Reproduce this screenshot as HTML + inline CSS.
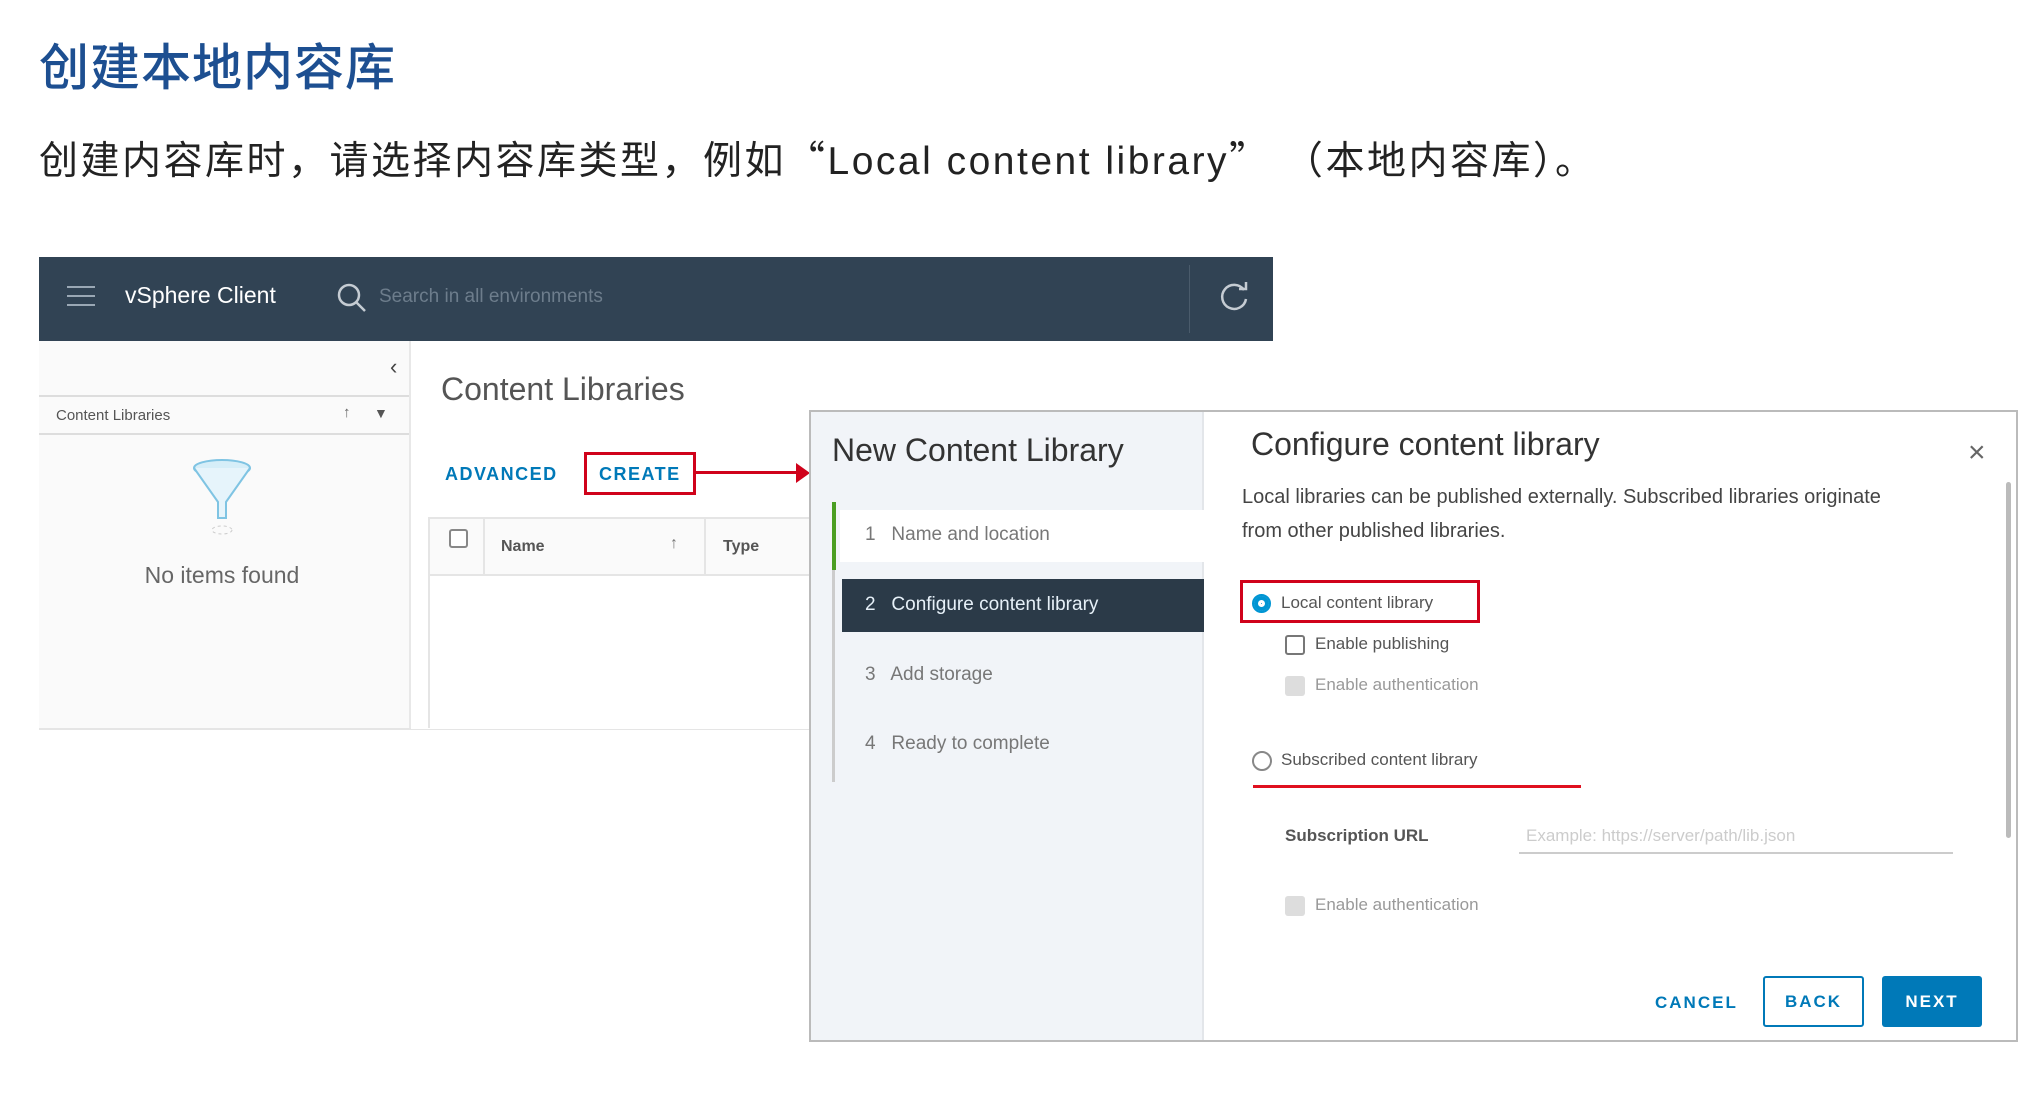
<!DOCTYPE html>
<html><head><meta charset="utf-8"><style>
*{box-sizing:border-box;margin:0;padding:0}
body{width:2035px;height:1117px;background:#fff;position:relative;overflow:hidden;font-family:"Liberation Sans","Noto Sans CJK SC",sans-serif;color:#333}
.a{position:absolute;white-space:nowrap}
.c{font-family:"Noto Sans CJK SC",sans-serif}
</style></head><body>
<div class="a" style="left:39px;top:28px;font-size:50px;color:#1d4f91;font-family:'Noto Sans CJK SC',sans-serif;font-weight:500;letter-spacing:1px">创建本地内容库</div>
<div class="a" style="left:39px;top:130px;font-size:39px;color:#222;letter-spacing:2.5px;font-family:'Liberation Sans','Noto Sans CJK SC',sans-serif">创建内容库时，请选择内容库类型，例如<span class="c">“</span>Local content library<span class="c">”</span> <span class="c">（</span>本地内容库<span class="c">）</span>。</div>

<!-- header -->
<div class="a" style="left:39px;top:257px;width:1234px;height:84px;background:#314354"></div>
<div class="a" style="left:67px;top:286px;width:28px;height:2px;background:#9aa8b5;box-shadow:0 9px 0 #9aa8b5,0 18px 0 #9aa8b5"></div>
<div class="a" style="left:125px;top:282px;font-size:23px;color:#fff">vSphere Client</div>
<svg class="a" style="left:336px;top:282px" width="32" height="32"><circle cx="13" cy="13" r="10" fill="none" stroke="#c5ccd3" stroke-width="2.5"/><line x1="20" y1="20" x2="29" y2="29" stroke="#c5ccd3" stroke-width="2.5"/></svg>
<div class="a" style="left:379px;top:286px;font-size:19px;color:#6d7d8c">Search in all environments</div>
<div class="a" style="left:1189px;top:265px;width:1px;height:68px;background:#4a5b6b"></div>
<svg class="a" style="left:1217px;top:280px" width="34" height="34"><path d="M27 10 A12 12 0 1 0 29 19" fill="none" stroke="#c5ccd3" stroke-width="2.5"/><path d="M22 9 L29 9 L29 2" fill="none" stroke="#c5ccd3" stroke-width="2.5"/></svg>

<!-- left panel -->
<div class="a" style="left:39px;top:341px;width:370px;height:388px;background:#fafafa"></div>
<div class="a" style="left:409px;top:341px;width:2px;height:388px;background:#e8e8e8"></div>
<div class="a" style="left:390px;top:354px;font-size:22px;color:#444">‹</div>
<div class="a" style="left:39px;top:395px;width:370px;height:2px;background:#ddd"></div>
<div class="a" style="left:56px;top:407px;font-size:15px;color:#555">Content Libraries</div>
<div class="a" style="left:343px;top:404px;font-size:15px;color:#666">↑</div>
<div class="a" style="left:374px;top:405px;font-size:14px;color:#555">▼</div>
<div class="a" style="left:39px;top:433px;width:370px;height:2px;background:#ddd"></div>
<svg class="a" style="left:190px;top:458px" width="66" height="80"><ellipse cx="32" cy="10" rx="28" ry="8" fill="#d6eef8" stroke="#7fc4e3" stroke-width="2"/><path d="M4 10 L28 44 L28 60 L36 60 L36 44 L60 10" fill="#e6f4fb" stroke="#7fc4e3" stroke-width="2"/><ellipse cx="32" cy="72" rx="10" ry="4" fill="none" stroke="#ccc" stroke-dasharray="3 3"/></svg>
<div class="a" style="left:122px;top:562px;width:200px;text-align:center;font-size:23px;color:#666">No items found</div>
<div class="a" style="left:39px;top:728px;width:770px;height:2px;background:#e5e5e5"></div>

<!-- content -->
<div class="a" style="left:411px;top:341px;width:862px;height:388px;background:#fff"></div>
<div class="a" style="left:441px;top:371px;font-size:32px;color:#555">Content Libraries</div>
<div class="a" style="left:445px;top:464px;font-size:18px;color:#0079b8;letter-spacing:1.5px;font-weight:bold">ADVANCED</div>
<div class="a" style="left:584px;top:452px;width:112px;height:43px;border:3px solid #d0021b"></div>
<div class="a" style="left:599px;top:464px;font-size:18px;color:#0079b8;letter-spacing:1.5px;font-weight:bold">CREATE</div>
<div class="a" style="left:696px;top:471px;width:104px;height:3px;background:#d0021b"></div>
<svg class="a" style="left:796px;top:463px" width="14" height="20"><path d="M0 0 L14 10 L0 20Z" fill="#d0021b"/></svg>
<div class="a" style="left:428px;top:517px;width:381px;height:59px;background:#fafafa;border-top:2px solid #e5e5e5;border-bottom:2px solid #e5e5e5;border-left:2px solid #e5e5e5"></div>
<div class="a" style="left:449px;top:529px;width:19px;height:19px;border:2px solid #888;border-radius:3px;background:#fff"></div>
<div class="a" style="left:483px;top:519px;width:2px;height:55px;background:#e5e5e5"></div>
<div class="a" style="left:704px;top:519px;width:2px;height:55px;background:#e5e5e5"></div>
<div class="a" style="left:501px;top:538px;font-size:16px;color:#555;font-weight:bold">Name</div>
<div class="a" style="left:670px;top:535px;font-size:16px;color:#777">↑</div>
<div class="a" style="left:723px;top:538px;font-size:16px;color:#555;font-weight:bold">Type</div>
<div class="a" style="left:428px;top:576px;width:2px;height:152px;background:#e5e5e5"></div>

<!-- dialog -->
<div class="a" style="left:809px;top:410px;width:1209px;height:632px;background:#fff;border:2px solid #bbb"></div>
<div class="a" style="left:811px;top:412px;width:393px;height:628px;background:#f1f4f8;border-right:2px solid #e3e6ea"></div>
<div class="a" style="left:832px;top:432px;font-size:32px;color:#333">New Content Library</div>
<div class="a" style="left:832px;top:502px;width:3px;height:280px;background:#ccc"></div>
<div class="a" style="left:832px;top:502px;width:4px;height:68px;background:#4a9e23"></div>
<div class="a" style="left:840px;top:510px;width:364px;height:52px;background:#fff"></div>
<div class="a" style="left:865px;top:524px;font-size:19px;color:#777">1&nbsp;&nbsp; Name and location</div>
<div class="a" style="left:842px;top:579px;width:362px;height:53px;background:#2b3a48"></div>
<div class="a" style="left:865px;top:594px;font-size:19px;color:#e6f0f8">2&nbsp;&nbsp; Configure content library</div>
<div class="a" style="left:865px;top:664px;font-size:19px;color:#777">3&nbsp;&nbsp; Add storage</div>
<div class="a" style="left:865px;top:733px;font-size:19px;color:#777">4&nbsp;&nbsp; Ready to complete</div>

<div class="a" style="left:1251px;top:426px;font-size:32px;color:#333">Configure content library</div>
<div class="a" style="left:1968px;top:436px;font-size:30px;color:#666">×</div>
<div class="a" style="left:2006px;top:482px;width:5px;height:356px;background:#bbb;border-radius:3px"></div>
<div class="a" style="left:1242px;top:480px;font-size:20px;color:#444;line-height:34px">Local libraries can be published externally. Subscribed libraries originate<br>from other published libraries.</div>

<div class="a" style="left:1240px;top:580px;width:240px;height:43px;border:3px solid #d0021b"></div>
<div class="a" style="left:1252px;top:594px;width:19px;height:19px;border-radius:50%;background:#0095d3;border:2px solid #0095d3;box-shadow:inset 0 0 0 4px #0095d3,inset 0 0 0 7px #fff"></div>
<div class="a" style="left:1281px;top:593px;font-size:17px;color:#555">Local content library</div>
<div class="a" style="left:1285px;top:635px;width:20px;height:20px;border:2px solid #777;border-radius:3px"></div>
<div class="a" style="left:1315px;top:634px;font-size:17px;color:#555">Enable publishing</div>
<div class="a" style="left:1285px;top:676px;width:20px;height:20px;background:#ddd;border-radius:3px"></div>
<div class="a" style="left:1315px;top:675px;font-size:17px;color:#999">Enable authentication</div>
<div class="a" style="left:1252px;top:751px;width:20px;height:20px;border:2px solid #888;border-radius:50%"></div>
<div class="a" style="left:1281px;top:750px;font-size:17px;color:#555">Subscribed content library</div>
<div class="a" style="left:1253px;top:785px;width:328px;height:3px;background:#e0101f"></div>
<div class="a" style="left:1285px;top:826px;font-size:17px;color:#555;font-weight:bold">Subscription URL</div>
<div class="a" style="left:1526px;top:826px;font-size:17px;color:#ccc">Example: https://server/path/lib.json</div>
<div class="a" style="left:1519px;top:852px;width:434px;height:2px;background:#ccc"></div>
<div class="a" style="left:1285px;top:896px;width:20px;height:20px;background:#ddd;border-radius:3px"></div>
<div class="a" style="left:1315px;top:895px;font-size:17px;color:#999">Enable authentication</div>

<div class="a" style="left:1655px;top:993px;font-size:17px;color:#0079b8;font-weight:bold;letter-spacing:2px">CANCEL</div>
<div class="a" style="left:1763px;top:976px;width:101px;height:51px;border:2px solid #0079b8;border-radius:3px;color:#0079b8;font-size:17px;font-weight:bold;letter-spacing:2px;text-align:center;line-height:47px">BACK</div>
<div class="a" style="left:1882px;top:976px;width:100px;height:51px;background:#0079b8;border-radius:3px;color:#fff;font-size:17px;font-weight:bold;letter-spacing:2px;text-align:center;line-height:51px">NEXT</div>
</body></html>
